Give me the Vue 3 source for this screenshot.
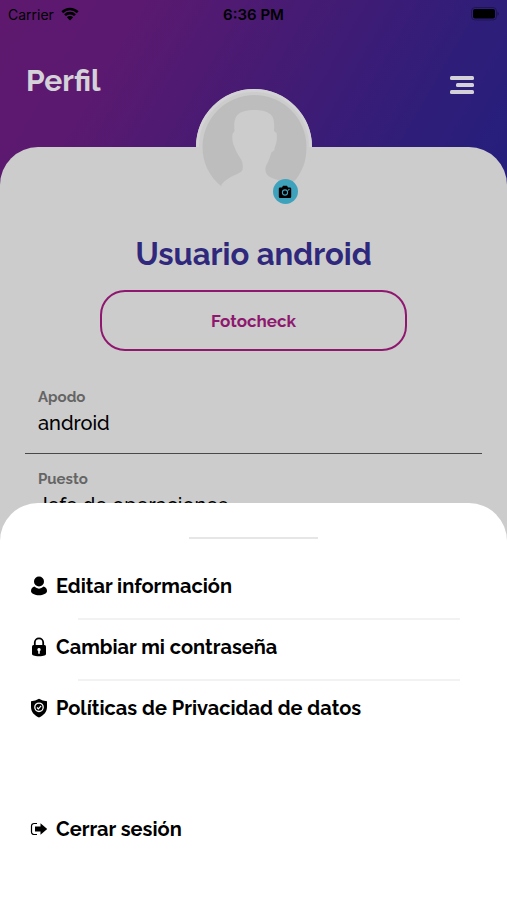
<script setup>
const fields = [
  { id: 'apodo', label: 'Apodo', value: 'android' },
  { id: 'puesto', label: 'Puesto', value: 'Jefe de operaciones' },
]
const actions = [
  { icon: 'user', label: 'Editar información' },
  { icon: 'lock', label: 'Cambiar mi contraseña' },
  { icon: 'shield', label: 'Políticas de Privacidad de datos' },
]
</script>

<template>
  <div class="screen">
    <div class="profile">
      <div class="status">
        <span class="carrier">
          Carrier
          <svg class="wifi" viewBox="0 0 18 14" aria-hidden="true">
            <path d="M1.3 5.2a11 11 0 0 1 15.4 0M4 8.1a7.2 7.2 0 0 1 10 0" fill="none" stroke="#000" stroke-width="2.6" />
            <path d="M9 13.6 5.8 10.3a4.6 4.6 0 0 1 6.4 0z" />
          </svg>
        </span>
        <span class="time">6:36 PM</span>
        <svg class="battery" viewBox="0 0 28 14" aria-hidden="true">
          <rect x=".5" y=".5" width="25" height="12.5" rx="3.5" fill="none" stroke="#000" stroke-opacity=".3" />
          <rect x="2" y="2" width="22" height="9.5" rx="2" />
          <path d="M26.5 4.8c1.6.6 1.6 3.4 0 4z" fill-opacity=".4" />
        </svg>
      </div>
      <header class="header">
        <h1>Perfil</h1>
        <button class="menu" type="button" aria-label="Menú">
          <svg viewBox="0 0 24 18" aria-hidden="true">
            <rect width="24" height="4" rx="1.5" />
            <rect x="6" y="7" width="18" height="4" rx="1.5" />
            <rect y="14" width="24" height="4" rx="1.5" />
          </svg>
        </button>
      </header>
      <main class="panel">
        <div class="avatar">
          <svg viewBox="0 0 116 116" aria-hidden="true">
            <circle cx="58" cy="58" r="58" fill="#f0f0f0" />
            <path d="M1.5 58a56.5 56.5 0 0 1 113 0" fill="none" stroke="#f8f7f9" stroke-width="3" />
            <path d="M25.5 97.5C13 87 6.5 74 6.5 58a52 52 0 0 1 104 0c0 14-4 24-11 33-5 5-12 2-18 0-5-2-9-3-11-6-2-4-1-8 1-11 2-4 3-8 4-11 2-1 3-1 3-4 2-4 3-11 2-15l-2.500-2c.5-7 0-12-2-15-3-4-9-6-18-6s-15 2-18 7c-2 4-2 9-1.500 14l-2 3c-.5 4 0 9 2 13 1 3 3 7 5 10 3 4 4 8 3 13-3 5-13 5-21 14.500z" fill="#dfdfdf" />
          </svg>
          <button class="camera" type="button" aria-label="Cambiar foto">
            <svg viewBox="0 0 14 14" aria-hidden="true">
              <path d="M2 2.400h2L5 .8h4l1 1.600h2a1.200 1.200 0 0 1 1.200 1.200v8.200A1.200 1.200 0 0 1 12 13H2a1.200 1.200 0 0 1-1.200-1.200V3.600A1.200 1.200 0 0 1 2 2.400z" />
              <circle cx="7" cy="7.500" r="2.600" fill="none" stroke="#4bbfdf" stroke-width="1.100" />
              <path d="m10.200 5.500 1.200-1.500" fill="none" stroke="#4bbfdf" stroke-width="1.200" />
            </svg>
          </button>
        </div>
        <h2>Usuario android</h2>
        <button class="badge" type="button">Fotocheck</button>
        <form class="fields">
          <div v-for="f in fields" :key="f.id" class="field">
            <label :for="f.id">{{ f.label }}</label>
            <input :id="f.id" type="text" :value="f.value" readonly />
          </div>
        </form>
      </main>
    </div>

    <div class="backdrop"></div>

    <section class="sheet" role="dialog" aria-label="Opciones">
      <div class="handle"></div>
      <ul>
        <li v-for="a in actions" :key="a.icon">
          <button class="action" type="button">
            <svg v-if="a.icon === 'user'" viewBox="0 0 18 20" aria-hidden="true">
              <circle cx="9" cy="5.500" r="5" />
              <path d="M4.300 10.600Q9 14.800 13.700 10.600 17 12 17 15c0 2.500-4 4.300-8 4.300S1 17.500 1 15q0-3 3.300-4.400z" />
            </svg>
            <svg v-else-if="a.icon === 'lock'" viewBox="0 0 18 20" aria-hidden="true">
              <path d="M4.800 9V5.500a4.200 4.200 0 0 1 8.400 0V9" fill="none" stroke="#000" stroke-width="1.800" />
              <path d="M3.500 8h11A1.500 1.500 0 0 1 16 9.500V17c0 1.200-2 2.200-7 2.200S2 18.200 2 17V9.500A1.500 1.500 0 0 1 3.500 8z" />
              <path d="M9 11a1.700 1.700 0 0 0-.8 3.200v2.600h1.600v-2.600A1.700 1.700 0 0 0 9 11z" fill="#fff" />
            </svg>
            <svg v-else viewBox="0 0 18 20" aria-hidden="true">
              <path d="M9 .8Q12.500 3 17 3.300V9c0 5-3.500 8.500-8 10.500C4.500 17.500 1 14 1 9V3.300Q5.500 3 9 .8z" />
              <circle cx="9" cy="9.300" r="4.200" fill="none" stroke="#fff" stroke-width="1.300" />
              <path d="m7 9.500 1.400 1.300 2.700-3" fill="none" stroke="#fff" stroke-width="1.200" />
            </svg>
            {{ a.label }}
          </button>
        </li>
      </ul>
      <button class="action logout" type="button">
        <svg viewBox="0 0 18 20" aria-hidden="true">
          <path d="M7 4.500H4A2.500 2.500 0 0 0 1.500 7v6A2.500 2.500 0 0 0 4 15.500h3" fill="none" stroke="#000" stroke-width="1.200" />
          <path d="M10.500 4.200 17.200 10l-6.700 5.800v-3.300H5v-5h5.500z" />
        </svg>
        Cerrar sesión
      </button>
    </section>
  </div>
</template>

<style>
body {
  margin: 0;
}
</style>

<style scoped>
.screen {
  position: relative;
  height: 100vh;
  overflow: hidden;
  font-family: Raleway, Lato, "Open Sans", sans-serif;
  color: #000;
}
button,
input {
  font: inherit;
  color: inherit;
  margin: 0;
  padding: 0;
  border: 0;
  background: none;
}
h1,
h2,
ul {
  margin: 0;
  padding: 0;
}
.profile {
  min-height: 100%;
  display: flex;
  flex-direction: column;
  background: linear-gradient(120deg, #6f1e82 0, #6c1e84 120px, #522088 270px, #38248f 420px, #2a2492 540px) no-repeat;
}
.status {
  display: grid;
  grid-template-columns: 1fr auto 1fr;
  align-items: center;
  height: 28px;
  padding: 0 8px;
  font-family: Inter, "Liberation Sans", sans-serif;
  font-size: 14px;
}
.carrier {
  display: flex;
  align-items: center;
  gap: 7px;
}
.wifi {
  width: 18px;
  height: 14px;
}
.time {
  font-size: 15px;
  font-weight: 600;
}
.battery {
  width: 28px;
  height: 14px;
  justify-self: end;
}
.header {
  display: flex;
  align-items: center;
  justify-content: space-between;
  height: 105px;
  padding: 0 33px 14px 26px;
}
h1 {
  font-size: 30px;
  line-height: 36px;
  font-weight: 700;
  color: #fbf6ff;
}
.menu {
  display: flex;
  padding-top: 8px;
}
.menu svg {
  width: 24px;
  height: 18px;
  fill: #fbf6ff;
}
.panel {
  flex: 1;
  display: flex;
  flex-direction: column;
  align-items: center;
  padding: 0 25px;
  background: #f0f0f0;
  border-radius: 38px 38px 0 0;
}
.avatar {
  position: relative;
  margin-top: -58px;
  width: 116px;
  height: 116px;
}
.avatar > svg {
  display: block;
  width: 100%;
  height: 100%;
}
.camera {
  position: absolute;
  right: 14px;
  bottom: 1px;
  width: 25px;
  height: 25px;
  display: grid;
  place-items: center;
  border-radius: 50%;
  background: #4bbfdf;
}
.camera svg {
  width: 14px;
  height: 14px;
}
h2 {
  margin-top: 29px;
  font-size: 31px;
  line-height: 40px;
  font-weight: 700;
  color: #383092;
}
.badge {
  width: 67%;
  height: 61px;
  margin-top: 16px;
  border: 2px solid #a81c84;
  border-radius: 25px;
  font-size: 17px;
  font-weight: 700;
  color: #a81c84;
}
.fields {
  width: 100%;
  margin-top: 36px;
}
.field {
  display: flex;
  flex-direction: column;
  height: 66px;
  margin-bottom: 15px;
  padding: 0 13px;
  border-bottom: 1px solid #555;
}
.field label {
  font-size: 15px;
  line-height: 20px;
  font-weight: 700;
  color: #777;
}
.field input {
  width: 100%;
  height: 32px;
  font-size: 20px;
  font-weight: 500;
}
.backdrop {
  position: absolute;
  inset: 0;
  background: rgba(0, 0, 0, 0.15);
}
.sheet {
  position: absolute;
  inset: auto 0 0;
  display: flex;
  flex-direction: column;
  padding: 34px 30px 39px;
  background: #fff;
  border-radius: 38px 38px 0 0;
}
.handle {
  align-self: center;
  width: 129px;
  height: 2px;
  margin-bottom: 20px;
  background: #e6e6e6;
}
ul {
  list-style: none;
}
li + li::before {
  content: "";
  display: block;
  height: 2px;
  margin: 0 17px 0 48px;
  background: #f2f2f2;
}
.action {
  display: flex;
  align-items: center;
  gap: 8px;
  width: 100%;
  height: 59px;
  padding-bottom: 6px;
  font-size: 20px;
  font-weight: 700;
  text-align: left;
}
.action svg {
  width: 18px;
  height: 20px;
}
.logout {
  margin-top: 62px;
}
</style>
